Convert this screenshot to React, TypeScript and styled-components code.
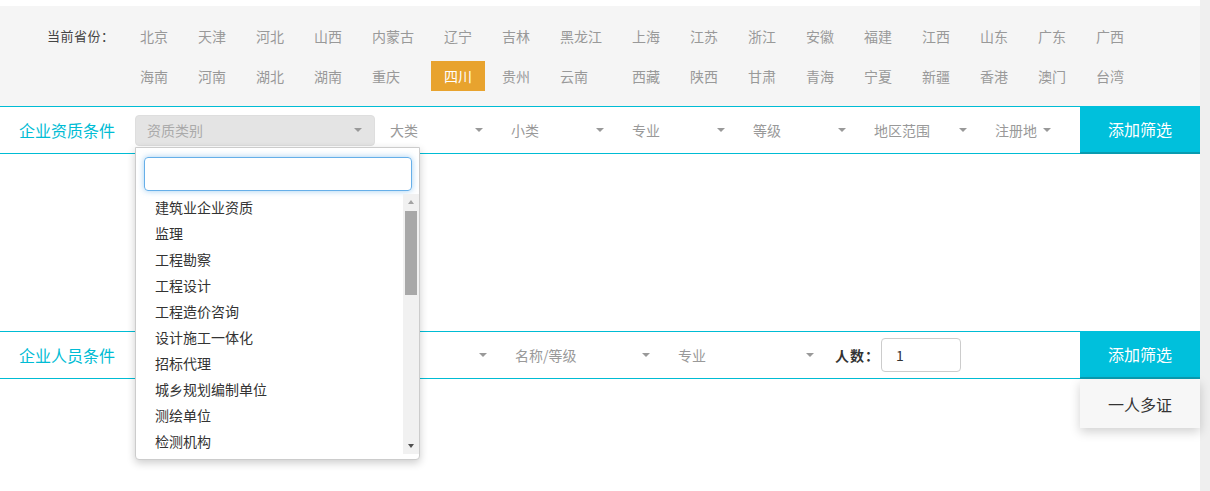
import React from "react";
import styled, { createGlobalStyle } from "styled-components";

const GlobalStyle = createGlobalStyle`
  html, body { margin: 0; padding: 0; background: #fff; }
  body { font-family: "Noto Sans CJK SC", "Noto Sans", "Liberation Sans", sans-serif; }
  * { box-sizing: border-box; }
`;

const TEAL = "#00bcd4";

const Page = styled.div`
  display: flex;
  width: 1210px;
  height: 491px;
  overflow: hidden;
`;

const Main = styled.div`
  width: 1200px;
  padding-top: 6px;
  display: flex;
  flex-direction: column;
`;

const PageScroll = styled.div`
  width: 10px;
  background: #efefef;
`;

const ProvinceBar = styled.div`
  height: 100px;
  background: #f5f5f5;
  display: flex;
  align-items: flex-start;
  padding: 15px 0 0 47px;
`;

const ProvinceLabel = styled.div`
  width: 80px;
  height: 30px;
  line-height: 30px;
  font-size: 13px;
  color: #444;
  letter-spacing: 0.5px;
`;

const ProvinceGrid = styled.div`
  display: grid;
  grid-template-columns: repeat(17, auto);
  column-gap: 4px;
  row-gap: 10px;
`;

const Province = styled.span<{ $active?: boolean }>`
  height: 30px;
  line-height: 30px;
  padding: 0 13px;
  font-size: 14px;
  white-space: nowrap;
  color: ${(p) => (p.$active ? "#fff" : "#999")};
  background: ${(p) => (p.$active ? "#e8a32e" : "transparent")};
`;

const FilterRow = styled.div`
  display: flex;
  height: 48px;
`;

const Fields = styled.div`
  flex: 1;
  display: flex;
  align-items: center;
  border-top: 1px solid ${TEAL};
  border-bottom: 1px solid ${TEAL};
`;

const RowLabel = styled.div`
  width: 135px;
  padding-left: 19px;
  font-size: 16px;
  color: ${TEAL};
  white-space: nowrap;
`;

const Caret = styled.span`
  width: 0;
  height: 0;
  border-left: 4px solid transparent;
  border-right: 4px solid transparent;
  border-top: 4px solid #999;
  flex: none;
`;

const SelectWrap = styled.div`
  position: relative;
`;

const GraySelect = styled.div<{ $w: number }>`
  width: ${(p) => p.$w}px;
  height: 31px;
  background: #e4e4e4;
  border: 1px solid #dedede;
  border-radius: 4px;
  display: flex;
  align-items: center;
  justify-content: space-between;
  padding: 0 12px 0 11px;
  font-size: 14px;
  color: #aaa;
`;

const PlainSelect = styled.div<{ $w?: number }>`
  width: ${(p) => (p.$w ? `${p.$w}px` : "auto")};
  height: 31px;
  display: flex;
  align-items: center;
  justify-content: ${(p) => (p.$w ? "space-between" : "flex-start")};
  gap: 6px;
  padding: 0 13px 0 15px;
  font-size: 14px;
  color: #999;
  white-space: nowrap;
`;

const AddButton = styled.div`
  position: relative;
  width: 120px;
  height: 48px;
  background: #00c0dc;
  border-bottom: 2px solid #0a9bb0;
  color: #fff;
  font-size: 16px;
  display: flex;
  align-items: center;
  justify-content: center;
`;

const SectionBody = styled.div`
  height: 177px;
`;

const CountLabel = styled.span`
  margin-left: 8px;
  font-size: 14px;
  font-weight: bold;
  color: #333;
  letter-spacing: 1px;
`;

const CountInput = styled.div`
  margin-left: 1px;
  width: 80px;
  height: 34px;
  border: 1px solid #ccc;
  border-radius: 4px;
  padding-left: 14px;
  line-height: 32px;
  font-size: 14px;
  color: #333;
`;

const Popover = styled.div`
  position: absolute;
  left: 0;
  top: 49px;
  width: 120px;
  height: 48px;
  background: #f7f7f7;
  box-shadow: 0 4px 10px rgba(0, 0, 0, 0.18);
  display: flex;
  align-items: center;
  justify-content: center;
  font-size: 16px;
  color: #333;
  z-index: 5;
`;

const Dropdown = styled.div`
  position: absolute;
  left: 0;
  top: 32px;
  width: 285px;
  height: 313px;
  background: #fff;
  border: 1px solid #ccc;
  border-radius: 0 0 4px 4px;
  box-shadow: 0 3px 8px rgba(0, 0, 0, 0.2);
  display: flex;
  flex-direction: column;
  z-index: 10;
`;

const SearchBox = styled.div`
  margin: 9px 7px 3px 8px;
  height: 34px;
  border: 1px solid #66afe9;
  border-radius: 4px;
  box-shadow: 0 0 6px rgba(102, 175, 233, 0.6);
  flex: none;
`;

const ListArea = styled.div`
  display: flex;
  height: 260px;
`;

const List = styled.ul`
  flex: 1;
  list-style: none;
  margin: 0;
  padding: 0;
  overflow: hidden;
`;

const Item = styled.li`
  height: 26px;
  line-height: 27px;
  padding-left: 19px;
  font-size: 14px;
  color: #333;
  white-space: nowrap;
`;

const ScrollTrack = styled.div`
  width: 16px;
  background: #f1f1f1;
  display: flex;
  flex-direction: column;
  align-items: center;
`;

const ScrollBtn = styled.div`
  height: 16px;
  width: 16px;
  display: flex;
  align-items: center;
  justify-content: center;
  flex: none;
`;

const ArrowUp = styled.span`
  border-left: 3.5px solid transparent;
  border-right: 3.5px solid transparent;
  border-bottom: 4px solid #a3a3a3;
`;

const ArrowDown = styled.span`
  border-left: 3.5px solid transparent;
  border-right: 3.5px solid transparent;
  border-top: 4px solid #505050;
`;

const Thumb = styled.div`
  width: 12px;
  height: 84px;
  margin-top: 1px;
  background: #a8a8a8;
  flex: none;
`;

const ScrollRest = styled.div`
  flex: 1;
`;

const row1 = ["北京", "天津", "河北", "山西", "内蒙古", "辽宁", "吉林", "黑龙江", "上海", "江苏", "浙江", "安徽", "福建", "江西", "山东", "广东", "广西"];
const row2 = ["海南", "河南", "湖北", "湖南", "重庆", "四川", "贵州", "云南", "西藏", "陕西", "甘肃", "青海", "宁夏", "新疆", "香港", "澳门", "台湾"];
const items = ["建筑业企业资质", "监理", "工程勘察", "工程设计", "工程造价咨询", "设计施工一体化", "招标代理", "城乡规划编制单位", "测绘单位", "检测机构"];

export default function App() {
  return (
    <>
      <GlobalStyle />
      <Page>
        <Main>
          <ProvinceBar>
            <ProvinceLabel>当前省份：</ProvinceLabel>
            <ProvinceGrid>
              {row1.map((p) => (
                <Province key={p}>{p}</Province>
              ))}
              {row2.map((p) => (
                <Province key={p} $active={p === "四川"}>
                  {p}
                </Province>
              ))}
            </ProvinceGrid>
          </ProvinceBar>

          <FilterRow>
            <Fields>
              <RowLabel>企业资质条件</RowLabel>
              <SelectWrap>
                <GraySelect $w={240}>
                  资质类别
                  <Caret />
                </GraySelect>
                <Dropdown>
                  <SearchBox />
                  <ListArea>
                    <List>
                      {items.map((it) => (
                        <Item key={it}>{it}</Item>
                      ))}
                    </List>
                    <ScrollTrack>
                      <ScrollBtn>
                        <ArrowUp />
                      </ScrollBtn>
                      <Thumb />
                      <ScrollRest />
                      <ScrollBtn>
                        <ArrowDown />
                      </ScrollBtn>
                    </ScrollTrack>
                  </ListArea>
                </Dropdown>
              </SelectWrap>
              {["大类", "小类", "专业", "等级", "地区范围"].map((s) => (
                <PlainSelect key={s} $w={121}>
                  {s}
                  <Caret />
                </PlainSelect>
              ))}
              <PlainSelect>
                注册地
                <Caret />
              </PlainSelect>
            </Fields>
            <AddButton>添加筛选</AddButton>
          </FilterRow>
          <SectionBody />

          <FilterRow>
            <Fields>
              <RowLabel>企业人员条件</RowLabel>
              <PlainSelect $w={365}>
                <span />
                <Caret />
              </PlainSelect>
              <PlainSelect $w={163}>
                名称/等级
                <Caret />
              </PlainSelect>
              <PlainSelect $w={164}>
                专业
                <Caret />
              </PlainSelect>
              <CountLabel>人数：</CountLabel>
              <CountInput>1</CountInput>
            </Fields>
            <AddButton>
              添加筛选
              <Popover>一人多证</Popover>
            </AddButton>
          </FilterRow>
        </Main>
        <PageScroll />
      </Page>
    </>
  );
}
